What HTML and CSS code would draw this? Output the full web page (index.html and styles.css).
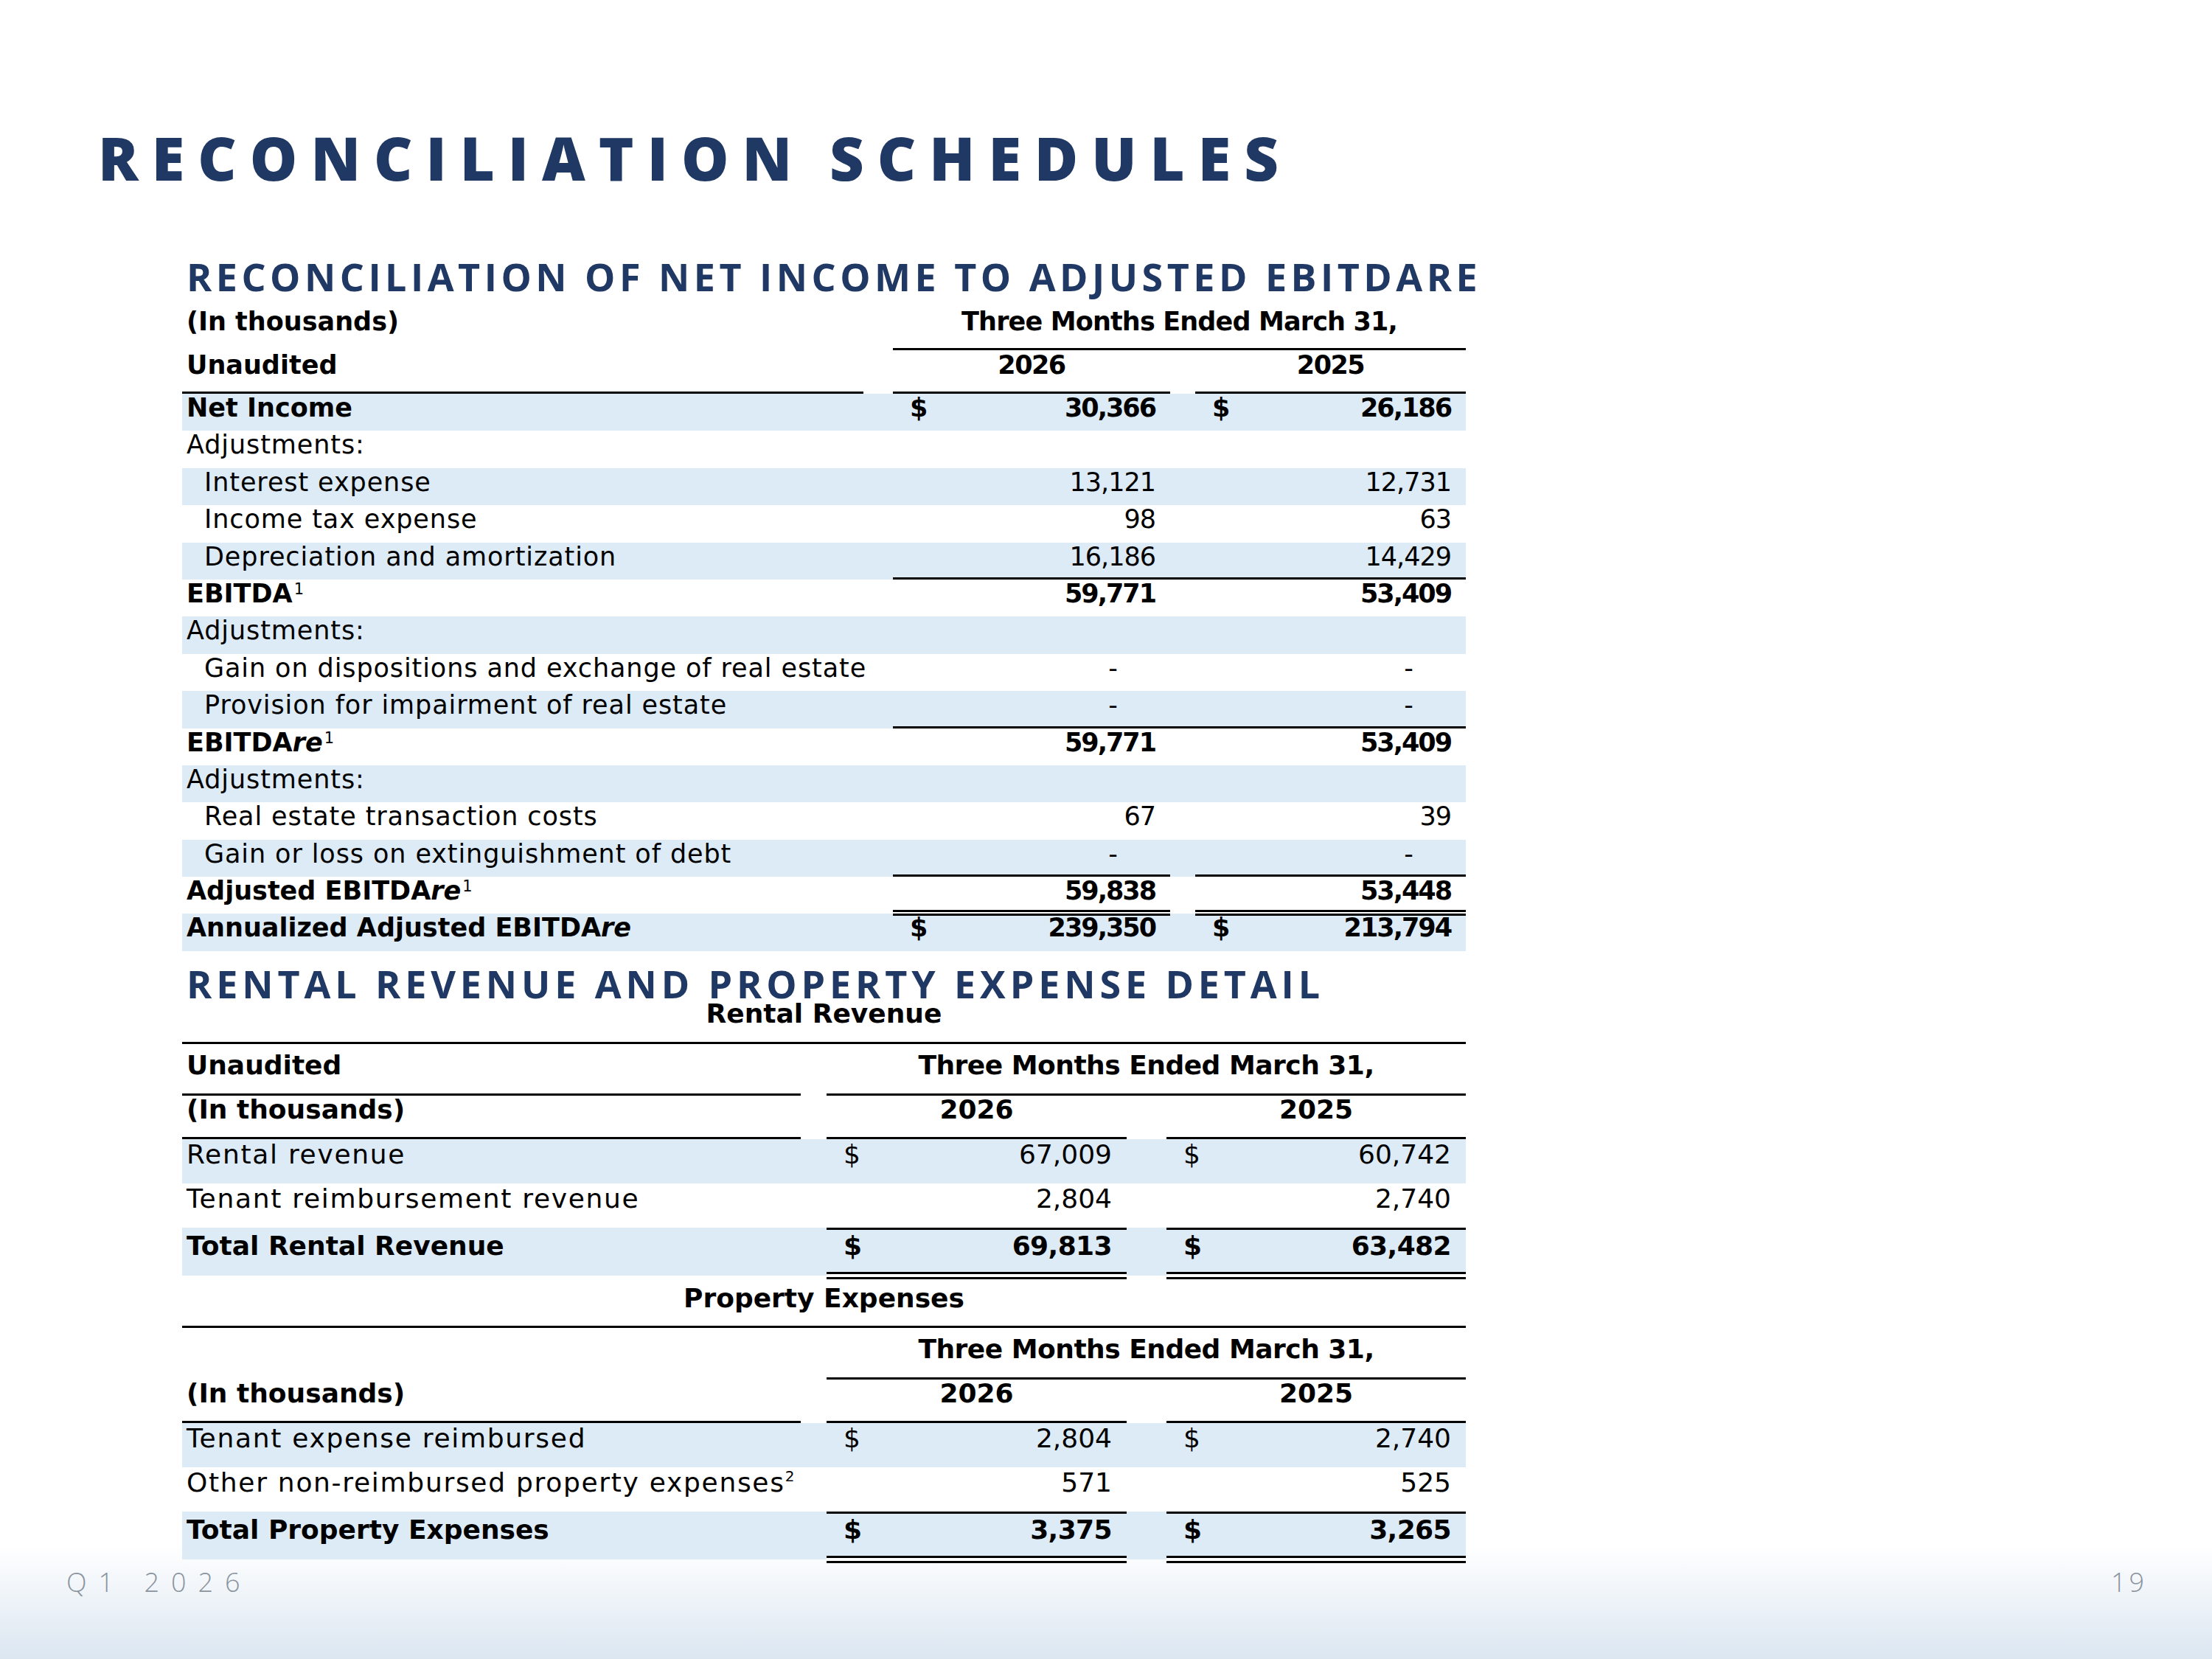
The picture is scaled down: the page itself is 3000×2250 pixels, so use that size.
FILE: index.html
```html
<!DOCTYPE html>
<html lang="en">
<head>
<meta charset="utf-8">
<title>Reconciliation Schedules</title>
<link rel="stylesheet" href="styles.css">
</head>
<body>
<div class="slide">
  <h1 class="title">RECONCILIATION SCHEDULES</h1>

  <h2 class="subtitle s1">RECONCILIATION OF NET INCOME TO ADJUSTED EBITDARE</h2>
  <div class="fin t1">
    <div class="row h1">
      <div class="c lab b">(In thousands)</div>
      <div class="c span b ctr hdr">Three Months Ended March 31,</div>
    </div>
    <div class="row h2">
      <div class="c lab b bot">Unaudited</div>
      <div class="c g"></div>
      <div class="c b ctr yr topbot">2026</div>
      <div class="c g top"></div>
      <div class="c b ctr yr topbot">2025</div>
    </div>
    <div class="row d blue">
      <div class="c lab b">Net Income</div><div class="c g"></div>
      <div class="c n b"><span class="cur">$</span><span>30,366</span></div><div class="c g"></div>
      <div class="c n b"><span class="cur">$</span><span>26,186</span></div>
    </div>
    <div class="row d">
      <div class="c lab">Adjustments:</div><div class="c g"></div><div class="c"></div><div class="c g"></div><div class="c"></div>
    </div>
    <div class="row d blue">
      <div class="c lab ind">Interest expense</div><div class="c g"></div>
      <div class="c n"><span>13,121</span></div><div class="c g"></div>
      <div class="c n"><span>12,731</span></div>
    </div>
    <div class="row d">
      <div class="c lab ind">Income tax expense</div><div class="c g"></div>
      <div class="c n"><span>98</span></div><div class="c g"></div>
      <div class="c n"><span>63</span></div>
    </div>
    <div class="row d blue">
      <div class="c lab ind">Depreciation and amortization</div><div class="c g"></div>
      <div class="c n bot"><span>16,186</span></div><div class="c g bot"></div>
      <div class="c n bot"><span>14,429</span></div>
    </div>
    <div class="row d">
      <div class="c lab b">EBITDA<sup class="fn">1</sup></div><div class="c g"></div>
      <div class="c n b"><span>59,771</span></div><div class="c g"></div>
      <div class="c n b"><span>53,409</span></div>
    </div>
    <div class="row d blue">
      <div class="c lab">Adjustments:</div><div class="c g"></div><div class="c"></div><div class="c g"></div><div class="c"></div>
    </div>
    <div class="row d">
      <div class="c lab ind">Gain on dispositions and exchange of real estate</div><div class="c g"></div>
      <div class="c n dash"><span>-</span></div><div class="c g"></div>
      <div class="c n dash"><span>-</span></div>
    </div>
    <div class="row d blue">
      <div class="c lab ind">Provision for impairment of real estate</div><div class="c g"></div>
      <div class="c n dash bot"><span>-</span></div><div class="c g bot"></div>
      <div class="c n dash bot"><span>-</span></div>
    </div>
    <div class="row d">
      <div class="c lab b">EBITDA<i>re</i><sup class="fn">1</sup></div><div class="c g"></div>
      <div class="c n b"><span>59,771</span></div><div class="c g"></div>
      <div class="c n b"><span>53,409</span></div>
    </div>
    <div class="row d blue">
      <div class="c lab">Adjustments:</div><div class="c g"></div><div class="c"></div><div class="c g"></div><div class="c"></div>
    </div>
    <div class="row d">
      <div class="c lab ind">Real estate transaction costs</div><div class="c g"></div>
      <div class="c n"><span>67</span></div><div class="c g"></div>
      <div class="c n"><span>39</span></div>
    </div>
    <div class="row d blue">
      <div class="c lab ind">Gain or loss on extinguishment of debt</div><div class="c g"></div>
      <div class="c n dash bot"><span>-</span></div><div class="c g"></div>
      <div class="c n dash bot"><span>-</span></div>
    </div>
    <div class="row d">
      <div class="c lab b">Adjusted EBITDA<i>re</i><sup class="fn">1</sup></div><div class="c g"></div>
      <div class="c n b dtop"><span>59,838</span></div><div class="c g"></div>
      <div class="c n b dtop"><span>53,448</span></div>
    </div>
    <div class="row d blue">
      <div class="c lab b">Annualized Adjusted EBITDA<i>re</i></div><div class="c g"></div>
      <div class="c n b top"><span class="cur">$</span><span>239,350</span></div><div class="c g"></div>
      <div class="c n b top"><span class="cur">$</span><span>213,794</span></div>
    </div>
  </div>

  <h2 class="subtitle s2">RENTAL REVENUE AND PROPERTY EXPENSE DETAIL</h2>
  <div class="caption cap1">Rental Revenue</div>
  <div class="fin t2">
    <div class="row h1">
      <div class="c lab b top">Unaudited</div>
      <div class="c g top"></div>
      <div class="c span b ctr hdr top">Three Months Ended March 31,</div>
    </div>
    <div class="row h2">
      <div class="c lab b topbot">(In thousands)</div>
      <div class="c g"></div>
      <div class="c b ctr topbot">2026</div>
      <div class="c g top"></div>
      <div class="c b ctr topbot">2025</div>
    </div>
    <div class="row d blue">
      <div class="c lab">Rental revenue</div><div class="c g"></div>
      <div class="c n"><span class="cur">$</span><span>67,009</span></div><div class="c g"></div>
      <div class="c n"><span class="cur">$</span><span>60,742</span></div>
    </div>
    <div class="row d">
      <div class="c lab">Tenant reimbursement revenue</div><div class="c g"></div>
      <div class="c n"><span>2,804</span></div><div class="c g"></div>
      <div class="c n"><span>2,740</span></div>
    </div>
    <div class="row tot">
      <div class="c lab b">Total Rental Revenue</div><div class="c g"></div>
      <div class="c n b tline"><span class="cur">$</span><span>69,813</span></div><div class="c g"></div>
      <div class="c n b tline"><span class="cur">$</span><span>63,482</span></div>
    </div>
  </div>

  <div class="caption cap2">Property Expenses</div>
  <div class="fin t2 t3">
    <div class="row h1">
      <div class="c lab b top"></div>
      <div class="c g top"></div>
      <div class="c span b ctr hdr top">Three Months Ended March 31,</div>
    </div>
    <div class="row h2">
      <div class="c lab b bot">(In thousands)</div>
      <div class="c g"></div>
      <div class="c b ctr topbot">2026</div>
      <div class="c g top"></div>
      <div class="c b ctr topbot">2025</div>
    </div>
    <div class="row d blue">
      <div class="c lab">Tenant expense reimbursed</div><div class="c g"></div>
      <div class="c n"><span class="cur">$</span><span>2,804</span></div><div class="c g"></div>
      <div class="c n"><span class="cur">$</span><span>2,740</span></div>
    </div>
    <div class="row d">
      <div class="c lab">Other non-reimbursed property expenses<sup class="fn2">2</sup></div><div class="c g"></div>
      <div class="c n"><span>571</span></div><div class="c g"></div>
      <div class="c n"><span>525</span></div>
    </div>
    <div class="row tot">
      <div class="c lab b">Total Property Expenses</div><div class="c g"></div>
      <div class="c n b tline"><span class="cur">$</span><span>3,375</span></div><div class="c g"></div>
      <div class="c n b tline"><span class="cur">$</span><span>3,265</span></div>
    </div>
  </div>

  <footer class="foot">
    <span class="q">Q1 2026</span>
    <span class="pg">19</span>
  </footer>
</div>
</body>
</html>
```

FILE: styles.css
```css
* { box-sizing: border-box; margin: 0; padding: 0; }
html, body { width: 3000px; height: 2250px; }
body { margin: 0; overflow: hidden; background: #fff; }

.slide {
  width: 3000px;
  height: 2250px;
  display: flex;
  flex-direction: column;
  align-items: flex-start;
  background: linear-gradient(to bottom, #ffffff 0, #ffffff 2095px, #dbe6f1 2250px);
  font-family: "DejaVu Sans", sans-serif;
  color: #000;
}

.title {
  font-family: "Open Sans", sans-serif;
  font-weight: 800;
  font-size: 81px;
  line-height: 81px;
  letter-spacing: 18px;
  word-spacing: -6px;
  color: #1f3864;
  margin: 173px 0 0 133px;
  white-space: nowrap;
}

.subtitle {
  font-family: "Open Sans", sans-serif;
  font-weight: 700;
  font-size: 52px;
  line-height: 52px;
  letter-spacing: 5.5px;
  color: #1f3864;
  margin-left: 253px;
  white-space: nowrap;
}
.s1 { margin-top: 95px; }
.s2 { margin-top: 21px; line-height: 46px; letter-spacing: 5.9px; }

.caption {
  width: 1741px;
  margin-left: 247px;
  text-align: center;
  font-weight: 700;
  font-size: 36px;
  line-height: 36px;
}
.cap1 { margin-top: 0; }
.cap2 { margin-top: 8px; }

.fin { margin-left: 247px; width: 1741px; }
.t1 { margin-top: 9px; }
.t2 { margin-top: 20px; }
.t3 { margin-top: 19px; }

.row { display: grid; background: #fff; }
.t1 .row { grid-template-columns: 924px 40px 376px 34px 367px; font-size: 35px; }
.t2 .row { grid-template-columns: 839px 35px 407px 54px 406px; font-size: 36px; }
.row.blue { background: #ddebf7; }

.c { line-height: 36px; white-space: nowrap; }
.lab { padding-left: 6px; letter-spacing: 0.9px; }
.t2 .lab { letter-spacing: 1.7px; }
.lab.b { letter-spacing: 0; }
.lab.ind { padding-left: 30px; }
.b { font-weight: 700; }
.ctr { text-align: center; }
.span { grid-column: 3 / 6; }
.t1 .hdr { letter-spacing: -0.85px; }
.t2 .hdr { letter-spacing: -0.5px; }
.t1 .yr { letter-spacing: -1.5px; }

.n { display: flex; justify-content: flex-end; padding: 0 20px 0 23px; }
.t1 .n { letter-spacing: -1px; }
.t1 .n.b { letter-spacing: -2px; }
.t2 .n.b { letter-spacing: -0.6px; }
.n .cur { margin-right: auto; letter-spacing: 0; }
.n.dash { padding-right: 72px; }

i { font-style: italic; }
.fn { font-size: 21px; font-weight: 400; vertical-align: 11px; line-height: 0; margin-left: 2px; }
.fn2 { font-size: 20px; font-weight: 400; vertical-align: 14px; line-height: 0; letter-spacing: 0; }

/* rules */
.top { box-shadow: inset 0 3px 0 #000; }
.bot { box-shadow: inset 0 -3px 0 #000; }
.topbot { box-shadow: inset 0 3px 0 #000, inset 0 -3px 0 #000; }
.dtop { box-shadow: inset 0 -2px 0 #fff, inset 0 -5px 0 #000; }
.tline {
  box-shadow: inset 0 3px 0 #000, inset 0 -3px 0 #000, inset 0 -7px 0 #fff, inset 0 -10px 0 #000;
  background: linear-gradient(#ddebf7, #ddebf7) top / 100% 65px no-repeat, #fff;
}

/* table 1 row geometry */
.t1 .h1 { height: 62px; }
.t1 .h1 .c { padding-top: 8px; }
.t1 .h2 { height: 62px; }
.t1 .h2 .c { padding-top: 5px; }
.t1 .d { height: 50.4px; }
.t1 .d .c { padding-top: 1px; }

/* tables 2/3 row geometry */
.t2 .h1 { height: 70px; }
.t2 .h1 .c { padding-top: 14px; }
.t2 .h2 { height: 62px; }
.t2 .h2 .c { padding-top: 4px; }
.t2 .d { height: 60px; }
.t2 .d .c { padding-top: 3px; }
.t2 .tot { height: 70px; background: linear-gradient(#ddebf7, #ddebf7) top / 100% 65px no-repeat; }
.t2 .tot .c { padding-top: 7px; }

.foot {
  margin-top: auto;
  width: 3000px;
  height: 122px;
  display: flex;
  justify-content: space-between;
  align-items: flex-start;
  padding: 0 88px 0 90px;
  font-family: "Open Sans", sans-serif;
  font-weight: 300;
  font-size: 36px;
  line-height: 36px;
  color: #8a949e;
}
.q { letter-spacing: 16px; }
.pg { letter-spacing: 4px; }
```
